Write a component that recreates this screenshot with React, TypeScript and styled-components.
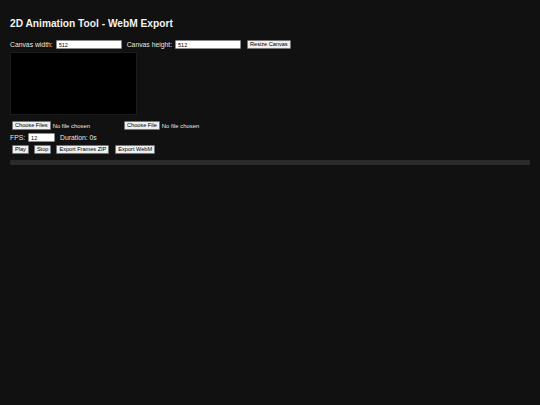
import React from "react";
import styled, { createGlobalStyle } from "styled-components";

const GlobalStyle = createGlobalStyle`
    html, body {
        margin: 0;
        padding: 0;
        background: #111111;
        color: #e6e6e6;
        font-family: "Liberation Sans", Arial, sans-serif;
    }
`;

const Page = styled.div`
    box-sizing: border-box;
    width: 540px;
    min-height: 405px;
    padding: 0 10px;
    background: #111111;
`;

const Title = styled.h1`
    margin: 18px 0 0;
    font-size: 10.2px;
    line-height: 12px;
    font-weight: bold;
    color: #f2f2f2;
`;

const Row = styled.div<{ $top: number; $height?: number }>`
    display: flex;
    align-items: center;
    margin-top: ${(p) => p.$top}px;
    height: ${(p) => p.$height ?? 9}px;
`;

const Label = styled.span<{ $ml?: number }>`
    font-size: 6.8px;
    color: #e6e6e6;
    margin-left: ${(p) => p.$ml ?? 0}px;
    white-space: nowrap;
`;

const TextInput = styled.input<{ $w: number; $ml?: number }>`
    box-sizing: border-box;
    width: ${(p) => p.$w}px;
    height: 9px;
    margin: 0 0 0 ${(p) => p.$ml ?? 3}px;
    padding: 0 2px;
    border: 1px solid #8a8a8a;
    border-radius: 1px;
    background: #ffffff;
    color: #000;
    font-family: "Liberation Sans", Arial, sans-serif;
    font-size: 5.5px;
    outline: none;
`;

const Button = styled.button<{ $ml?: number }>`
    box-sizing: border-box;
    height: 9px;
    margin: 0 0 0 ${(p) => p.$ml ?? 0}px;
    padding: 0 2px;
    border: 1px solid #767676;
    border-radius: 1px;
    background: #efefef;
    color: #000;
    font-family: "Liberation Sans", Arial, sans-serif;
    font-size: 5.6px;
    line-height: 7px;
    white-space: nowrap;
    cursor: pointer;
`;

const Canvas = styled.canvas`
    display: block;
    box-sizing: border-box;
    width: 127px;
    height: 63px;
    margin-top: 3px;
    background: #000;
    border: 1px solid #1c1c1c;
`;

const FilePicker = styled.label<{ $ml: number }>`
    display: flex;
    align-items: center;
    width: 110px;
    margin-left: ${(p) => p.$ml}px;
`;

const FileName = styled.span`
    margin-left: 2px;
    font-size: 5.9px;
    color: #e6e6e6;
    white-space: nowrap;
`;

const Progress = styled.div`
    height: 5px;
    margin-top: 6px;
    background: #2a2a2a;
    border-radius: 1px;
`;

export default function App() {
    return (
        <Page>
            <GlobalStyle />
            <Title>2D Animation Tool - WebM Export</Title>
            <Row $top={10}>
                <Label>Canvas width:</Label>
                <TextInput $w={66} defaultValue="512" />
                <Label $ml={5}>Canvas height:</Label>
                <TextInput $w={66} defaultValue="512" />
                <Button $ml={6}>Resize Canvas</Button>
            </Row>
            <Canvas />
            <Row $top={6}>
                <FilePicker $ml={2}>
                    <Button>Choose Files</Button>
                    <FileName>No file chosen</FileName>
                </FilePicker>
                <FilePicker $ml={2}>
                    <Button>Choose File</Button>
                    <FileName>No file chosen</FileName>
                </FilePicker>
            </Row>
            <Row $top={3}>
                <Label>FPS:</Label>
                <TextInput $w={27} defaultValue="12" />
                <Label $ml={5}>Duration: 0s</Label>
            </Row>
            <Row $top={3}>
                <Button $ml={2}>Play</Button>
                <Button $ml={5}>Stop</Button>
                <Button $ml={5}>Export Frames ZIP</Button>
                <Button $ml={6}>Export WebM</Button>
            </Row>
            <Progress />
        </Page>
    );
}
